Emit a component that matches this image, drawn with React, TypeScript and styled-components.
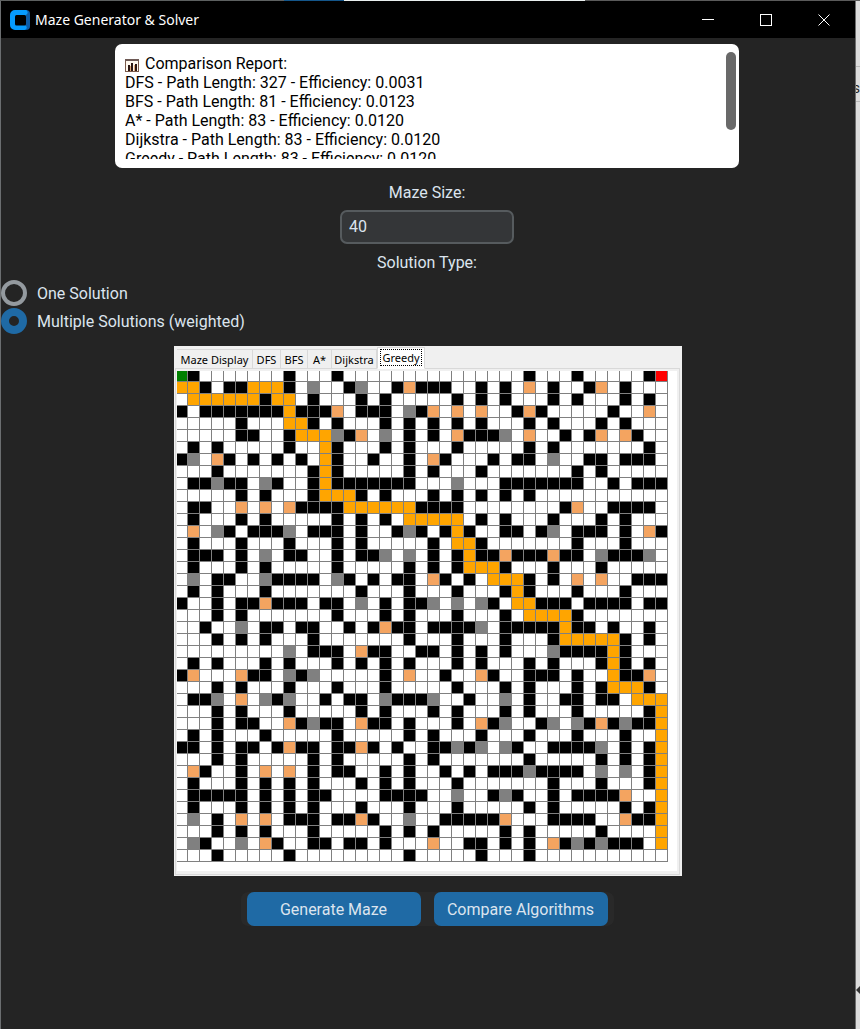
import React, { useState } from 'react';
import styled, { createGlobalStyle } from 'styled-components';

const GlobalStyle = createGlobalStyle`
  * { box-sizing: border-box; }
  html, body { margin: 0; background: #242424; }
  body { font-family: Roboto, "Liberation Sans", sans-serif; font-size: 16px; line-height: 19px; color: #dce4ee; }
  button, input { font: inherit; }
`;

const Desktop = styled.div`
  min-height: 100vh;
  display: grid;
  grid-template-columns: 1px 1fr 5px;
  grid-template-rows: 1px 1fr;
`;

const TopEdge = styled.div`
  grid-column: 1 / -1;
  background: linear-gradient(to right, #5d6060 33%, #14568a 33%, #14568a 40%, #e9efef 40%, #e9efef 68%, #5a5a5a 68%);
`;

const LeftEdge = styled.div`
  background: #6b6e70;
`;

const RightEdge = styled.aside`
  overflow: hidden;
  display: flex;
  flex-direction: column;
  align-items: flex-end;
  padding-top: 65px;
  border-left: 1px solid #6e6e6e;
  background: #dcdcdc;
  color: #222222;
  font-size: 14px;
`;

const EdgeField = styled.div`
  display: flex;
  align-items: center;
  justify-content: flex-end;
  align-self: stretch;
  height: 36px;
  padding-top: 8px;
  border: solid #b8b8b8;
  border-width: 1px 0;
`;

const EdgeArrow = styled.svg`
  margin: auto 0 35px;
`;

const Window = styled.div`
  display: flex;
  flex-direction: column;
  min-width: 0;
  background: #242424;
`;

const TitleBar = styled.header`
  display: flex;
  align-items: center;
  height: 37px;
  padding: 0 2px 0 9px;
  background: #000000;
`;

const Title = styled.h1`
  flex: 1;
  margin: 0 0 0 5px;
  color: #ffffff;
  font: 400 14px/20px "Noto Sans", "Open Sans", sans-serif;
`;

const WindowButton = styled.button`
  display: flex;
  align-items: center;
  justify-content: center;
  width: 58px;
  height: 37px;
  padding: 0;
  border: 0;
  background: none;
`;

const Main = styled.main`
  display: flex;
  flex-direction: column;
  align-items: center;
  padding: 6px 2px 0 0;
`;

const Report = styled.section`
  position: relative;
  width: calc(100% - 228px);
  max-width: 624px;
  height: 124px;
  padding: 10px 20px 9px 10px;
  border-radius: 7px;
  background: #ffffff;
  color: #000000;
`;

const ReportText = styled.div`
  height: 100%;
  overflow-y: auto;
  scrollbar-width: none;
`;

const ReportLine = styled.p`
  display: flex;
  align-items: center;
  gap: 6px;
  margin: 0;
  white-space: pre;
`;

const ScrollThumb = styled.div`
  position: absolute;
  top: 8px;
  right: 3px;
  width: 10px;
  height: 78px;
  border-radius: 5px;
  background: #696969;
`;

const FieldLabel = styled.label`
  margin-top: 15px;
`;

const SizeInput = styled.input`
  width: 174px;
  height: 34px;
  margin-top: 8px;
  padding: 0 7px 2px;
  border: 2px solid #565b5e;
  border-radius: 7px;
  background: #343638;
  color: #dce4ee;
`;

const Options = styled.fieldset`
  display: flex;
  flex-direction: column;
  align-items: flex-start;
  align-self: stretch;
  gap: 2px;
  margin: 9px 0 0;
  padding: 0;
  border: 0;
`;

const OptionsTitle = styled.legend`
  margin: 0 auto 8px;
  padding: 0;
`;

const Option = styled.label`
  display: flex;
  align-items: center;
  gap: 10px;
  height: 26px;
`;

const Radio = styled.input`
  appearance: none;
  width: 26px;
  height: 26px;
  margin: 0;
  border: 4px solid #949a9f;
  border-radius: 50%;
  &:checked { border: 8px solid #1f6aa5; }
`;

const Notebook = styled.section`
  margin: 12px 0 0 2px;
  padding: 1px 2px 1px 1px;
  background: #f0f0f0;
`;

const TabList = styled.div`
  display: flex;
  align-items: flex-end;
  height: 22px;
  margin-bottom: -1px;
  padding-left: 2px;
`;

const Tab = styled.button<{ $width: number; $active: boolean }>`
  position: relative;
  width: ${(p) => p.$width}px;
  height: ${(p) => (p.$active ? 22 : 20)}px;
  padding: ${(p) => (p.$active ? '1px 2px 2px' : '1px 0 0')};
  border: 1px solid #d9d9d9;
  border-left-width: ${(p) => (p.$active ? 1 : 0)}px;
  border-bottom-color: ${(p) => (p.$active ? '#ffffff' : '#d9d9d9')};
  background: ${(p) => (p.$active ? '#ffffff' : '#f0f0f0')};
  color: #000000;
  font: 11px/16px "Noto Sans", "Open Sans", sans-serif;
  white-space: nowrap;
  outline: none;
`;

const TabText = styled.span<{ $active: boolean }>`
  display: flex;
  align-items: center;
  justify-content: center;
  height: 17px;
  border: ${(p) => (p.$active ? '1px dotted #000000' : '0')};
`;

const Pane = styled.div`
  padding: 2px 2px 3px 1px;
  border: 1px solid #d9d9d9;
`;

const MazeCanvas = styled.svg`
  display: block;
  background: #ffffff;
`;

const Actions = styled.div`
  display: flex;
  gap: 13px;
  margin-top: 16px;
  padding: 0 6px;
  border-radius: 7px;
  background: #292929;
`;

const ActionButton = styled.button`
  width: 174px;
  height: 34px;
  padding: 0;
  border: 0;
  border-radius: 7px;
  background: #1f6aa5;
  color: #dce4ee;
`;

const REPORT = [
  'DFS - Path Length: 327 - Efficiency: 0.0031',
  'BFS - Path Length: 81 - Efficiency: 0.0123',
  'A* - Path Length: 83 - Efficiency: 0.0120',
  'Dijkstra - Path Length: 83 - Efficiency: 0.0120',
  'Greedy - Path Length: 83 - Efficiency: 0.0120',
];

const TABS = [
  { name: 'Maze Display', width: 76 },
  { name: 'DFS', width: 28 },
  { name: 'BFS', width: 27 },
  { name: 'A*', width: 24 },
  { name: 'Dijkstra', width: 45 },
  { name: 'Greedy', width: 48 },
];

const COLORS: Record<string, string> = {
  w: '#000000',
  p: '#ffa500',
  g: '#808080',
  s: '#f4a460',
  b: '#008000',
  e: '#ff0000',
};

// One string per row: w wall, p path, g and s weighted cells, b begin, e end,
// each followed by a column or a range of columns.
const MAZE = [
  'b0 w1 w9 w13 w29 w33 w39 e40',
  'p0-1 w2 w4-5 p6-8 w9 g11 w14 g15 w18 s19 w20-22 w25 w27 s29 w31 w34 s35 w37',
  'p1-6 w7 p8-9 w11 w15 w17 w23 w25 w27 w31 w33 w37 w39',
  'w0 w2-8 p9 w10-12 s13 w15-17 g19 w20 s21 s23 s25 w28 s29 w30 w36 s39',
  'w5 p9-10 w11 w13 w17 w19 w21 w23 w25 w29 w31 w35 w37',
  'w5-6 w9 p10-12 g13 w14 s15 g17 w19 w21 s23 w24-26 g27 s29 w32 w34 s35 s37 w38',
  'w1 w3 w9 p12 w13 w17 w19 w23 w29 w31 w39',
  'w0 g1 s3 w4 w6 w8 w10 p12 w13 w16 w19 s21 w22 w26 w28-29 g31 w34-35 w37-39',
  'w3 w11 p12 w13 w19 w21 w25 w33 w35',
  'w1-2 g3 w4-5 g7 w8 w11 p12 w13-19 g23 w27-33 w36 w38-40',
  'w5 w7 w11 p12-14 w15 w17 w21 w23 w25 w27 w29',
  'w1-2 s5 s7 s9 w10-13 p14-19 w20-23 w32 s33 w36-39',
  'w1 w5 w7 w13 w15 w17 p19-23 w25 w27 w31 w35 w37',
  's1 g3 w4 w6-8 g9 w11-13 w15 w18 g19 w20 w22 p23 w24 w27-28 w30 g31 w33-35 w37 s39 w40',
  'w1 w5 w9 w13 w15 w21 p23-24 w25 w33 w37',
  'w1-3 w5 g7 w9-10 w13 w15-16 g17 g19 w21 w23 p24 w25-26 s27 w28-30 s31 w32-33 g35 w36-38 g39',
  'w1 w5 w7 w13 w19 w21 w23 p24-26 w27 w31 w35',
  'g1 w3-4 g7 w8-11 g13 w14 w16 w18-19 s21 w22 w24 p26-28 w29 w31 s33 s35 w38-40',
  'w1 w3 w7 w15 w19 w23 w27 p28 w29 w33 w37',
  'w0 w3 w5-6 s7 w8-10 w12-13 g15 w17 w19-20 g21 g23 g25 w26 p28-29 w30-32 w34-37 w39-40',
  'w3 w5 w13 w17 w19 w23 w27 p29-32 w33',
  'w2 g5 w7-8 w10-11 w14 w16 s17 w18-19 w21-24 g25 w27-31 p32 w33-34 w36 w39',
  'w3 w5 w7 w11 w19 w23 w27 w31 p32-36 w37 w39',
  'g9 w11-13 s15 w16-17 w20-21 w23 w25 w27 g31 w32-35 p36 w37',
  'w1 w3 w7 w9 w13 w15 w17 w19 w23 w25 w29 w31 w35 p36 w37 w39',
  'w0 s1 s5 w6-7 g9 w10 g11 w17 s19 w22 s25 w26 w29-31 w33 p36 w37-38 s39',
  'w3 w5 w9 w13 w17 w23 w27 w29 w33 w35 p36-38 w39',
  'w1-2 g3 s5 g7 w8 g9 w12 w14-15 g17 w18-20 g21 w24 g27 w29 w32-33 w35-36 p38-40',
  'w3 w5 w9 w15 w17 w21 w23 w27 w29 w33 w39 p40',
  'w3 w5-6 s9 w10 g11 w12-13 s15 w16-17 w19 w23 s25 w26 g27 w30 g31 g33 w34 s35 w36 g37 w38-39 p40',
  'w1 w3 w7 w13 w19 w21 w25 w29 w33 w37 p40',
  'w0-1 w3 w5-6 w8 s9 w10-11 w13-14 s15 w16 w18 w21-22 g23 w24 g25 g27 w28 w31-34 g35 w37 w39 p40',
  'w3 w5 w11 w13 w19 w21 w29 w35 w37 w39 p40',
  's1 w2 w5 s7 s9 w11 w13-14 w17 w19 w22 w24 w26-28 g29 w30-33 g35 g37 w39 p40',
  'w1 w5 w7 w9 w11 w15 w17 w19 w23 w31 w35 w39 p40',
  'w1-5 w7 w9 w11-12 w17-20 g23 w26 g27 w28 w31 w33-36 s37 p40',
  'w1 w5 w7 w9 w11 w15 w19 w23 w29 w31 w37 w39 p40',
  'g1 w3 s5 s7 w9-11 w13-14 s15 w16 g19 w22-26 s27 w31-34 s37 w38-39 p40',
  'w3 w5 w7 w11 w17 w19 w21 w27 w29 w35 p40',
  'g1 w2 g5 s7 w8 w11-12 w14-15 w17 s21 w24-25 w27 w29 s31 w32 g33 w34 g35 w36-38 p40',
  'w3 w9 w19 w25 w29',
];

const PITCH = 12;

function decodeRow(row: string): string[] {
  const cells: string[] = Array(MAZE.length).fill('#ffffff');
  row.split(' ').forEach((run) => {
    const [from, to = from] = run.slice(1).split('-').map(Number);
    cells.fill(COLORS[run[0]], from, to + 1);
  });
  return cells;
}

function Maze() {
  return (
    <MazeCanvas width="500" height="500" viewBox="0 0 500 500" shapeRendering="crispEdges" role="img" aria-label="Maze">
      <rect width="491" height="491" fill="#808080" />
      {MAZE.map((row, y) =>
        decodeRow(row).map((fill, x) => (
          <rect key={`${x}-${y}`} x={x * PITCH - 1} y={y * PITCH - 1} width="11" height="11" fill={fill} />
        )),
      )}
    </MazeCanvas>
  );
}

function AppLogo() {
  return (
    <svg width="20" height="20" viewBox="0 0 20 20" aria-hidden="true">
      <path d="M12 0h4a4 4 0 0 1 4 4v12a4 4 0 0 1-4 4h-4z" fill="#0d5ca8" />
      <path d="M5 0h9.500a2.500 2.500 0 0 1 2 4.500L15 6H6v9h9l1.500 1.500a2.500 2.500 0 0 1-2 3.500H5a5 5 0 0 1-5-5V5a5 5 0 0 1 5-5z" fill="#069bff" />
      <rect x="5" y="5" width="11" height="10.500" rx="1.500" fill="#000000" />
    </svg>
  );
}

function ChartIcon() {
  return (
    <svg width="14" height="17" viewBox="0 0 14 17" shapeRendering="crispEdges" aria-hidden="true">
      <rect x="0.500" y="4.500" width="13" height="12" fill="#fff8ee" stroke="#7a5a4a" />
      <path d="M0 5h14" stroke="#6e5a55" strokeWidth="2" />
      <path d="M4 10v6M7 8v8M11 9v7" stroke="#2c1712" strokeWidth="2" />
      <path d="M5.500 11v5M9.500 10v6" stroke="#e0a878" />
    </svg>
  );
}

export default function App() {
  const [tab, setTab] = useState('Greedy');
  const [solution, setSolution] = useState('multiple');

  return (
    <>
      <GlobalStyle />
      <Desktop>
        <TopEdge />
        <LeftEdge />
        <Window>
          <TitleBar>
            <AppLogo />
            <Title>Maze Generator &amp; Solver</Title>
            <WindowButton aria-label="Minimize">
              <svg width="12" height="12" shapeRendering="crispEdges"><path d="M0 5.500h12" stroke="#ffffff" /></svg>
            </WindowButton>
            <WindowButton aria-label="Maximize">
              <svg width="12" height="12" shapeRendering="crispEdges"><rect x="0.500" y="0.500" width="11" height="11" fill="none" stroke="#ffffff" /></svg>
            </WindowButton>
            <WindowButton aria-label="Close">
              <svg width="12" height="12"><path d="M0.500 0.500l11 11M11.500 0.500l-11 11" stroke="#ffffff" /></svg>
            </WindowButton>
          </TitleBar>
          <Main>
            <Report>
              <ReportText>
                <ReportLine><ChartIcon />Comparison Report:</ReportLine>
                {REPORT.map((line) => <ReportLine key={line}>{line}</ReportLine>)}
              </ReportText>
              <ScrollThumb />
            </Report>
            <FieldLabel htmlFor="maze-size">Maze Size:</FieldLabel>
            <SizeInput id="maze-size" type="text" defaultValue="40" />
            <Options>
              <OptionsTitle>Solution Type:</OptionsTitle>
              <Option>
                <Radio type="radio" name="solution" checked={solution === 'one'} onChange={() => setSolution('one')} />
                One Solution
              </Option>
              <Option>
                <Radio type="radio" name="solution" checked={solution === 'multiple'} onChange={() => setSolution('multiple')} />
                Multiple Solutions (weighted)
              </Option>
            </Options>
            <Notebook>
              <TabList role="tablist">
                {TABS.map(({ name, width }) => (
                  <Tab key={name} role="tab" aria-selected={tab === name} $width={width} $active={tab === name} onClick={() => setTab(name)}>
                    <TabText $active={tab === name}>{name}</TabText>
                  </Tab>
                ))}
              </TabList>
              <Pane role="tabpanel"><Maze /></Pane>
            </Notebook>
            <Actions>
              <ActionButton>Generate Maze</ActionButton>
              <ActionButton>Compare Algorithms</ActionButton>
            </Actions>
          </Main>
        </Window>
        <RightEdge>
          <EdgeField>s</EdgeField>
          <EdgeArrow width="4" height="8" aria-hidden="true"><path d="M4 0v8L0 4z" fill="#333333" /></EdgeArrow>
        </RightEdge>
      </Desktop>
    </>
  );
}
